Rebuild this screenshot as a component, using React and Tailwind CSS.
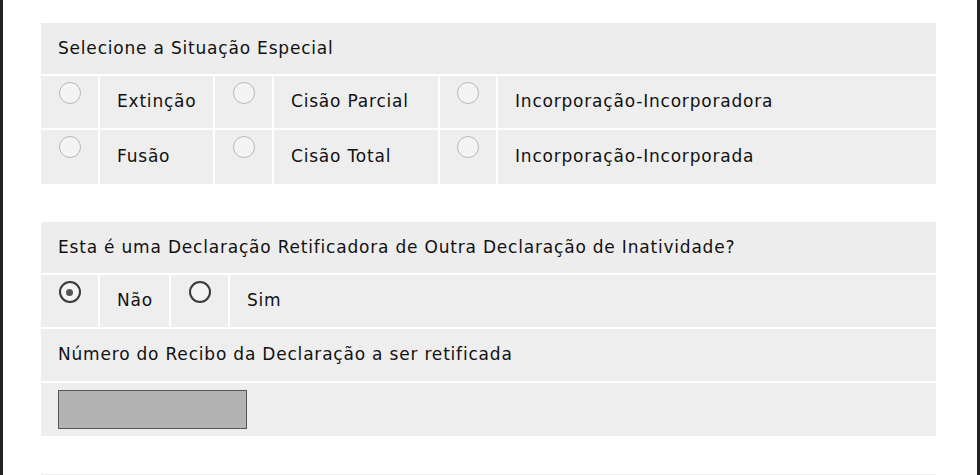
import React from "react";

function Radio({ checked, faint }) {
  return (
    <span
      className={
        "flex items-center justify-center w-[22px] h-[22px] rounded-full bg-[#f4f4f4] " +
        (faint ? "border border-[#b8b8b8]" : "border-2 border-[#3a3a3a]")
      }
    >
      {checked && <span className="w-[7px] h-[7px] rounded-full bg-[#555]" />}
    </span>
  );
}

function RadioCell({ w, checked, faint }) {
  return (
    <div className={"bg-[#eeeeee] flex justify-center pt-[6px] " + w}>
      <Radio checked={checked} faint={faint} />
    </div>
  );
}

function LabelCell({ w, children }) {
  return (
    <div className={"bg-[#eeeeee] flex items-center pl-[17px] " + w}>
      {children}
    </div>
  );
}

export default function App() {
  return (
    <div
      className="w-[980px] h-[475px] overflow-hidden bg-white border-l-[3px] border-r-[3px] border-[#222] mr-[2px] text-[#111] text-[17px] tracking-[0.8px]"
      style={{ fontFamily: '"DejaVu Sans", Verdana, sans-serif' }}
    >
      <div className="pl-[38px] pr-[41px] pt-[23px] flex flex-col gap-[38px]">
        <div className="flex flex-col gap-[2px] bg-white">
          <div className="bg-[#ededed] h-[51px] flex items-center pl-[17px]">
            Selecione a Situação Especial
          </div>
          <div className="flex gap-[2px] h-[52px]">
            <RadioCell w="w-[57px]" faint />
            <LabelCell w="w-[113px]">Extinção</LabelCell>
            <RadioCell w="w-[57px]" faint />
            <LabelCell w="w-[164px]">Cisão Parcial</LabelCell>
            <RadioCell w="w-[56px]" faint />
            <LabelCell w="flex-1">Incorporação-Incorporadora</LabelCell>
          </div>
          <div className="flex gap-[2px] h-[54px]">
            <RadioCell w="w-[57px]" faint />
            <LabelCell w="w-[113px]">Fusão</LabelCell>
            <RadioCell w="w-[57px]" faint />
            <LabelCell w="w-[164px]">Cisão Total</LabelCell>
            <RadioCell w="w-[56px]" faint />
            <LabelCell w="flex-1">Incorporação-Incorporada</LabelCell>
          </div>
        </div>

        <div className="flex flex-col gap-[2px] bg-white">
          <div className="bg-[#ededed] h-[51px] flex items-center pl-[17px]">
            Esta é uma Declaração Retificadora de Outra Declaração de Inatividade?
          </div>
          <div className="flex gap-[2px] h-[52px]">
            <RadioCell w="w-[57px]" checked />
            <LabelCell w="w-[69px]">Não</LabelCell>
            <RadioCell w="w-[57px]" />
            <LabelCell w="flex-1">Sim</LabelCell>
          </div>
          <div className="bg-[#eeeeee] h-[52px] flex items-center pl-[17px]">
            Número do Recibo da Declaração a ser retificada
          </div>
          <div className="bg-[#eeeeee] h-[53px] flex items-center pl-[17px]">
            <input
              disabled
              className="w-[189px] h-[39px] bg-[#b3b3b3] border border-[#555]"
            />
          </div>
        </div>

        <div className="bg-[#eeeeee] h-[40px]" />
      </div>
    </div>
  );
}
